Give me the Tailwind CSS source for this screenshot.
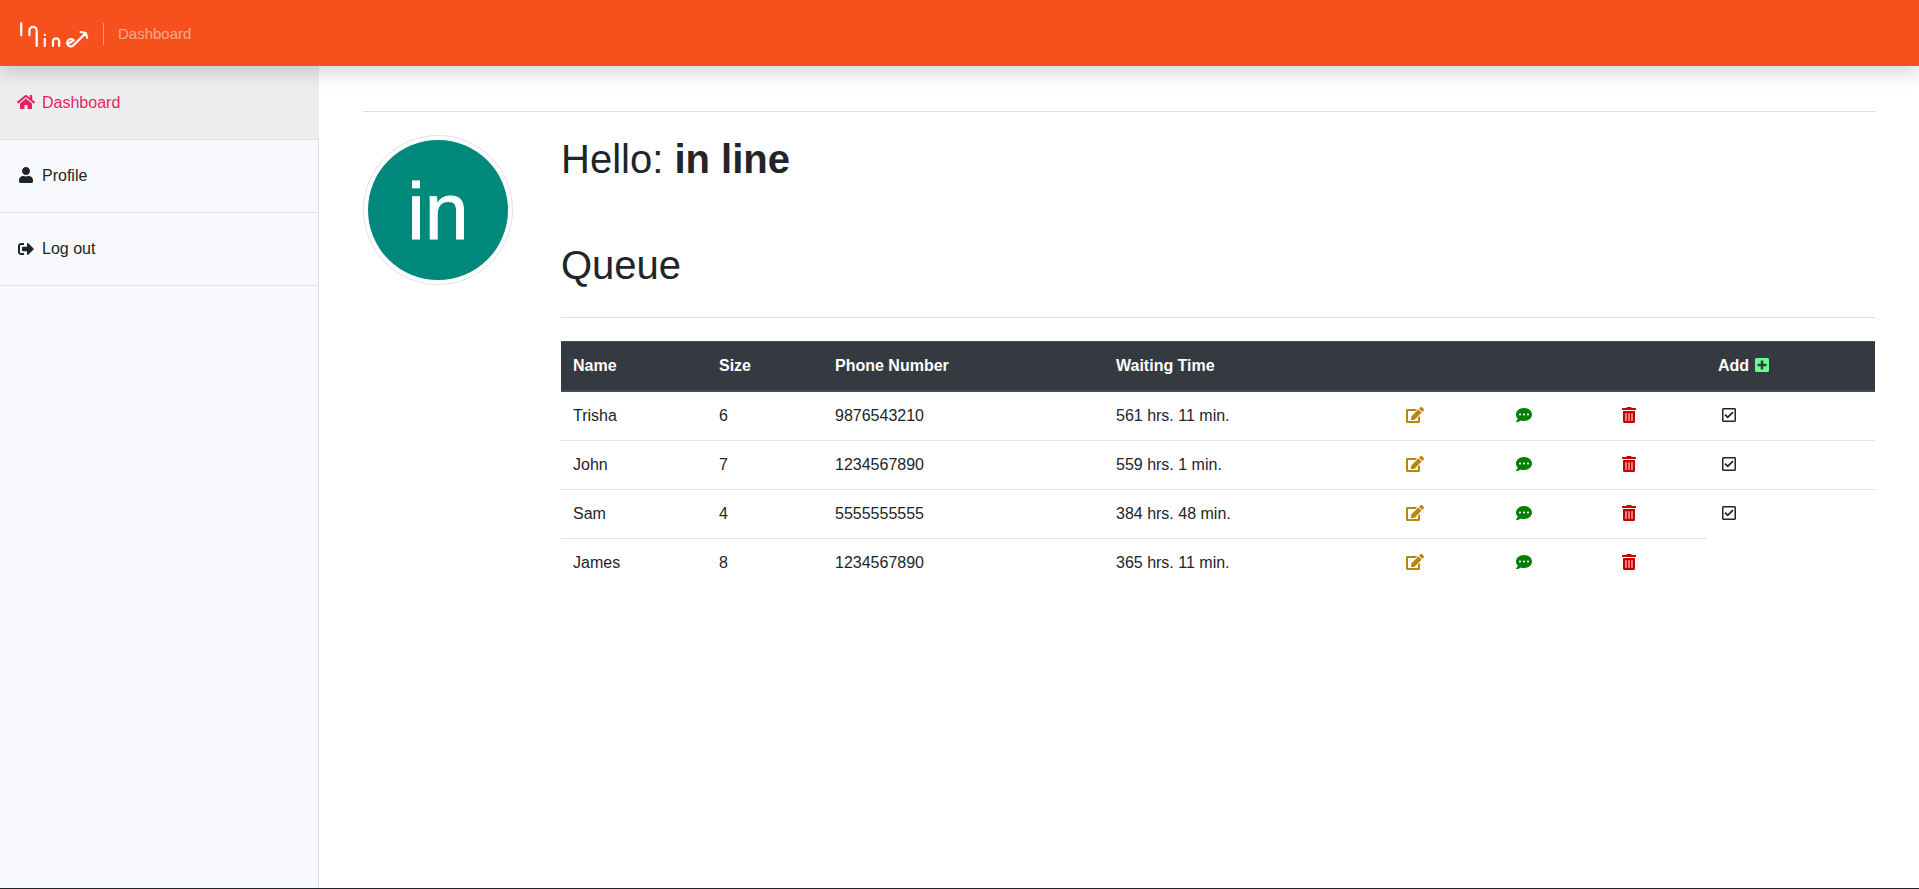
<!DOCTYPE html>
<html lang="en">
<head>
<meta charset="utf-8">
<title>Dashboard</title>
<script src="https://cdn.jsdelivr.net/npm/@tailwindcss/browser@4"></script>
</head>
<body class="flex h-[889px] flex-col overflow-hidden border-b border-[#212529] bg-white font-['Liberation_Sans',Arial,sans-serif] text-base text-[#212529]">
<svg class="hidden">
  <symbol id="home" viewBox="0 0 576 512"><path d="M280.37 148.26L96 300.11V464a16 16 0 0 0 16 16l112.06-.29a16 16 0 0 0 15.92-16V368a16 16 0 0 1 16-16h64a16 16 0 0 1 16 16v95.64a16 16 0 0 0 16 16.05L464 480a16 16 0 0 0 16-16V300L295.67 148.26a12.19 12.19 0 0 0-15.3 0zM571.6 251.47L488 182.56V44.05a12 12 0 0 0-12-12h-56a12 12 0 0 0-12 12v72.61L318.47 43a48 48 0 0 0-61 0L4.34 251.47a12 12 0 0 0-1.6 16.9l25.5 31A12 12 0 0 0 45.15 301l235.22-193.74a12.19 12.19 0 0 1 15.3 0L530.9 301a12 12 0 0 0 16.9-1.6l25.5-31a12 12 0 0 0-1.7-16.93z"/></symbol>
  <symbol id="user" viewBox="0 0 448 512"><path d="M224 256c70.7 0 128-57.3 128-128S294.7 0 224 0 96 57.3 96 128s57.3 128 128 128zm89.6 32h-16.7c-22.2 10.2-46.9 16-72.9 16s-50.6-5.8-72.9-16h-16.7C60.2 288 0 348.2 0 422.4V464c0 26.5 21.5 48 48 48h352c26.5 0 48-21.5 48-48v-41.6c0-74.2-60.2-134.4-134.4-134.4z"/></symbol>
  <symbol id="logout" viewBox="0 0 512 512"><path d="M497 273L329 441c-15 15-41 4.5-41-17v-96H152c-13.3 0-24-10.7-24-24v-96c0-13.3 10.7-24 24-24h136V88c0-21.4 25.9-32 41-17l168 168c9.3 9.4 9.3 24.6 0 34zM192 436v-40c0-6.6-5.4-12-12-12H96c-17.7 0-32-14.3-32-32V160c0-17.7 14.3-32 32-32h84c6.6 0 12-5.4 12-12V76c0-6.6-5.4-12-12-12H96c-53 0-96 43-96 96v192c0 53 43 96 96 96h84c6.6 0 12-5.4 12-12z"/></symbol>
  <symbol id="edit" viewBox="0 0 576 512"><path d="M402.6 83.2l90.2 90.2c3.8 3.8 3.8 10 0 13.8L274.4 405.6l-92.8 10.3c-12.4 1.4-22.9-9.1-21.5-21.5l10.3-92.8L388.8 83.2c3.8-3.8 10-3.8 13.8 0zm162-22.9l-48.8-48.8c-15.2-15.2-39.9-15.2-55.2 0l-35.4 35.4c-3.8 3.8-3.8 10 0 13.8l90.2 90.2c3.8 3.8 10 3.8 13.8 0l35.4-35.4c15.2-15.3 15.2-40 0-55.2zM384 346.2V448H64V128h229.8c3.2 0 6.2-1.3 8.5-3.5l40-40c7.6-7.6 2.2-20.5-8.5-20.5H48C21.5 64 0 85.5 0 112v352c0 26.5 21.5 48 48 48h352c26.5 0 48-21.5 48-48V306.2c0-10.7-12.9-16-20.5-8.5l-40 40c-2.2 2.3-3.5 5.3-3.5 8.5z"/></symbol>
  <symbol id="chat" viewBox="0 0 512 512"><path d="M256 32C114.6 32 0 125.1 0 240c0 49.6 21.4 95 57 130.7C44.5 421.1 2.7 466 2.2 466.5c-2.2 2.3-2.8 5.7-1.5 8.7S4.8 480 8 480c66.3 0 116-31.8 140.6-51.4 32.7 12.3 69 19.4 107.4 19.4 141.4 0 256-93.1 256-208S397.4 32 256 32zM128 272c-17.7 0-32-14.3-32-32s14.3-32 32-32 32 14.3 32 32-14.3 32-32 32zm128 0c-17.7 0-32-14.3-32-32s14.3-32 32-32 32 14.3 32 32-14.3 32-32 32zm128 0c-17.7 0-32-14.3-32-32s14.3-32 32-32 32 14.3 32 32-14.3 32-32 32z"/></symbol>
  <symbol id="trash" viewBox="0 0 448 512"><path d="M32 464a48 48 0 0 0 48 48h288a48 48 0 0 0 48-48V128H32zm272-256a16 16 0 0 1 32 0v224a16 16 0 0 1-32 0zm-96 0a16 16 0 0 1 32 0v224a16 16 0 0 1-32 0zm-96 0a16 16 0 0 1 32 0v224a16 16 0 0 1-32 0zM432 32H312l-9.4-18.7A24 24 0 0 0 281.1 0H166.8a23.72 23.72 0 0 0-21.4 13.3L136 32H16A16 16 0 0 0 0 48v32a16 16 0 0 0 16 16h416a16 16 0 0 0 16-16V48a16 16 0 0 0-16-16z"/></symbol>
  <symbol id="check" viewBox="0 0 448 512"><path d="M400 32H48C21.49 32 0 53.49 0 80v352c0 26.51 21.49 48 48 48h352c26.51 0 48-21.49 48-48V80c0-26.51-21.49-48-48-48zm0 400H48V80h352v352zm-35.864-241.724L191.547 361.48c-4.705 4.667-12.303 4.637-16.97-.068l-90.781-91.516c-4.667-4.705-4.637-12.303.069-16.971l22.719-22.536c4.705-4.667 12.303-4.637 16.97.069l59.792 60.277 141.352-140.216c4.705-4.667 12.303-4.637 16.97.068l22.536 22.718c4.667 4.706 4.637 12.304-.068 16.971z"/></symbol>
  <symbol id="plus" viewBox="0 0 448 512"><path d="M400 32H48C21.5 32 0 53.5 0 80v352c0 26.5 21.5 48 48 48h352c26.5 0 48-21.5 48-48V80c0-26.5-21.5-48-48-48zm-32 252c0 6.6-5.4 12-12 12h-92v92c0 6.6-5.4 12-12 12h-56c-6.6 0-12-5.4-12-12v-92H92c-6.6 0-12-5.4-12-12v-56c0-6.6 5.4-12 12-12h92v-92c0-6.6 5.4-12 12-12h56c6.6 0 12 5.4 12 12v92h92c6.6 0 12 5.4 12 12v56z"/></symbol>
</svg>

<header class="relative z-10 flex h-[66px] shrink-0 items-center bg-[#f6511d] pl-4 shadow-[0_8px_16px_rgba(0,0,0,0.15)]">
  <svg class="h-[30px] w-[75px]" viewBox="16 18 75 30" fill="none" stroke="#fff" stroke-width="2.2" stroke-linecap="round" stroke-linejoin="round">
    <path d="M21.2 23.200v12M29.4 35.2v-4.600a3.650 3.650 0 0 1 7.300 0v15.400M44.8 38.8v7.200M44.8 34.8v.2M53 46v-4.600a3.100 3.100 0 0 1 6.200 0v4.600"/>
    <path d="M69 43.200l4.700-2.800A3.700 3.700 0 1 0 73 45.700L85.300 33.600M80.600 32l5.200 1 1.400 4.800"/>
  </svg>
  <span class="mt-0.5 ml-3 h-[22px] w-px bg-white/40"></span>
  <span class="mt-0.5 ml-[14px] text-[15px]/6 text-white/50">Dashboard</span>
</header>

<div class="flex grow">
  <aside class="w-[319px] shrink-0 border-r border-[#dee2e6] bg-[#f8f9fc]">
    <a class="-mr-px flex h-[74px] items-center gap-1.5 border-b border-[#dee2e6] bg-[#eee] pl-4 text-[#e91e63]"><svg class="-mt-0.5 h-4 w-5 fill-current"><use href="#home"/></svg>Dashboard</a>
    <a class="flex h-[73px] items-center gap-1.5 border-b border-[#dee2e6] pl-4"><svg class="-mt-0.5 h-4 w-5 fill-current"><use href="#user"/></svg>Profile</a>
    <a class="flex h-[73px] items-center gap-1.5 border-b border-[#dee2e6] pl-4"><svg class="h-4 w-5 fill-current"><use href="#logout"/></svg>Log out</a>
  </aside>

  <main class="grow pt-[45px] pr-11 pl-11">
    <hr class="border-black/[0.13]">
    <div class="flex gap-12 pt-[23px]">
      <div class="size-[150px] shrink-0 rounded-full border border-[#dee2e6] p-1">
        <div class="flex size-full items-center justify-center rounded-full bg-[#00897b] pt-[3px] text-[79px]/[79px] text-white [-webkit-text-stroke:0.9px_#fff]">in</div>
      </div>
      <section class="grow">
        <h1 class="text-[40px]/12">Hello: <b>in line</b></h1>
        <h1 class="mt-[58px] text-[40px]/12">Queue</h1>
        <hr class="mt-7 border-black/[0.13]">
        <div class="mt-[23px]">
          <div class="grid h-[51px] grid-cols-[146px_116px_281px_290px_110px_106px_96px_169px] items-center border-t border-b-2 border-[#454d55] bg-[#343a40] font-bold text-white *:pl-3">
            <span>Name</span><span>Size</span><span>Phone Number</span><span>Waiting Time</span><span></span><span></span><span></span>
            <span class="flex items-center gap-1.5">Add <svg class="-mt-0.5 h-4 w-3.5 fill-[#66ff8c]"><use href="#plus"/></svg></span>
          </div>
          <div id="rows"></div>
        </div>
      </section>
    </div>
  </main>
</div>

<script>
const rows = [
  ['Trisha', 6, '9876543210', '561 hrs. 11 min.'],
  ['John', 7, '1234567890', '559 hrs. 1 min.'],
  ['Sam', 4, '5555555555', '384 hrs. 48 min.'],
  ['James', 8, '1234567890', '365 hrs. 11 min.'],
];
document.getElementById('rows').innerHTML = rows.map(([name, size, phone, wait], i) => {
  const line = i === 0 ? 'h-12' : 'h-[49px] border-t border-[#dee2e6]';
  const cell = line + ' flex items-center pl-3';
  const last = i === 3 ? '<div></div>' : `<div class="${cell}"><svg class="-mt-0.5 ml-1 h-4 w-3.5 fill-[#212529]"><use href="#check"/></svg></div>`;
  return `<div class="grid grid-cols-[146px_116px_281px_290px_110px_106px_96px_169px]">
    <div class="${cell}">${name}</div><div class="${cell}">${size}</div><div class="${cell}">${phone}</div><div class="${cell}">${wait}</div>
    <div class="${cell}"><svg class="-mt-0.5 h-4 w-[18px] fill-[#b8860b]"><use href="#edit"/></svg></div>
    <div class="${cell}"><svg class="-mt-0.5 size-4 fill-[#008000]"><use href="#chat"/></svg></div>
    <div class="${cell}"><svg class="-mt-0.5 h-4 w-3.5 fill-[#c80000]"><use href="#trash"/></svg></div>${last}</div>`;
}).join('');
</script>
</body>
</html>
